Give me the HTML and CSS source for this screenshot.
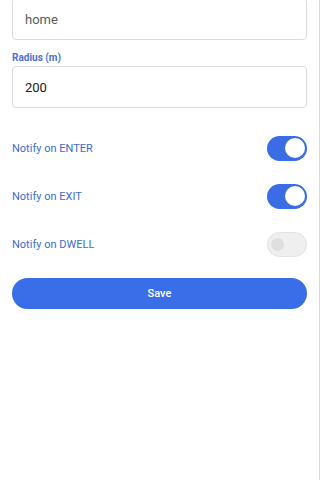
FILE: index.html
```html
<!DOCTYPE html>
<html>
<head>
<meta charset="utf-8">
<link rel="stylesheet" href="styles.css">
</head>
<body>
<div class="page">
  <div class="form">
    <div class="input first">home</div>
    <div class="label">Radius (m)</div>
    <div class="input value">200</div>
    <div class="toggles">
      <div class="row">
        <span class="row-text">Notify on ENTER</span>
        <span class="switch on"><span class="knob"></span></span>
      </div>
      <div class="row">
        <span class="row-text">Notify on EXIT</span>
        <span class="switch on"><span class="knob"></span></span>
      </div>
      <div class="row">
        <span class="row-text">Notify on DWELL</span>
        <span class="switch off"><span class="knob"></span></span>
      </div>
    </div>
    <button class="save">Save</button>
  </div>
</div>
</body>
</html>
```

FILE: styles.css
```css
html, body {
  margin: 0;
  padding: 0;
  background: #fff;
}
body {
  font-family: Roboto, "Liberation Sans", sans-serif;
  width: 320px;
  height: 480px;
  overflow: hidden;
}
.page {
  width: 319px;
  height: 480px;
  border-right: 1px solid #d9d9d9;
}
.form {
  padding: 0 12px 0 12px;
  display: flex;
  flex-direction: column;
}
.input {
  height: 42px;
  box-sizing: border-box;
  border: 1px solid #dcdcdc;
  border-radius: 4px;
  padding: 0 12px;
  display: flex;
  align-items: center;
  font-size: 13px;
  color: #202020;
}
.input.first {
  margin-top: -2px;
  color: #5a5a5a;
}
.label {
  margin-top: 10px;
  height: 16px;
  line-height: 16px;
  font-size: 10px;
  font-weight: 700;
  color: #4a72d6;
}
.input.value {
  margin-top: 0;
}
.toggles {
  margin-top: 16px;
  display: flex;
  flex-direction: column;
}
.row {
  height: 48px;
  display: flex;
  align-items: center;
  justify-content: space-between;
}
.row-text {
  font-size: 11px;
  color: #3e6bd3;
}
.switch {
  width: 40px;
  height: 25px;
  box-sizing: border-box;
  border-radius: 13px;
  display: flex;
  align-items: center;
  position: relative;
}
.switch.on {
  background: #3a6ce6;
  justify-content: flex-end;
  padding-right: 2px;
}
.switch.on .knob {
  width: 20px;
  height: 20px;
  border-radius: 50%;
  background: #fff;
}
.switch.off {
  background: #efefef;
  border: 1px solid #e2e2e2;
  padding-left: 3px;
}
.switch.off .knob {
  width: 13px;
  height: 13px;
  border-radius: 50%;
  background: #dedede;
}
.save {
  margin-top: 10px;
  height: 31px;
  border: none;
  border-radius: 16px;
  background: #3a6ee8;
  color: #fff;
  font-family: Roboto, "Liberation Sans", sans-serif;
  font-size: 11px;
  font-weight: 500;
  padding: 0;
}
```
